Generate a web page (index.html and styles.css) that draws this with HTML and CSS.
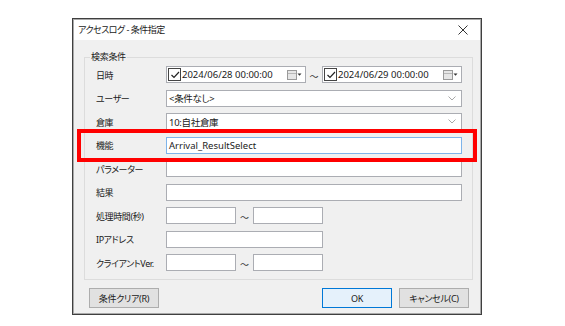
FILE: index.html
```html
<!DOCTYPE html>
<html lang="ja">
<head>
<meta charset="utf-8">
<link rel="stylesheet" href="styles.css">
</head>
<body>
<div class="dialog">
  <div class="titlebar">
    <span class="title">アクセスログ - 条件指定</span>
    <svg class="close" width="10" height="10" viewBox="0 0 10 10"><path d="M0.5 0.5 L9.5 9.5 M9.5 0.5 L0.5 9.5" stroke="#333" stroke-width="1" fill="none"/></svg>
  </div>
  <div class="content">
    <fieldset class="group">
      <legend>検索条件</legend>
      <div class="rows">
        <div class="label">日時</div>
        <div class="field pair">
          <div class="datebox">
            <span class="chk"><svg width="10" height="10" viewBox="0 0 10 10"><path d="M1.5 5 L4 7.5 L9 2" stroke="#222" stroke-width="1.2" fill="none"/></svg></span>
            <span class="dtext">2024/06/28 00:00:00</span>
            <span class="cal"><svg width="15" height="10" viewBox="0 0 15 10"><rect x="0.5" y="0.5" width="9" height="9" fill="#e6e6e6" stroke="#9a9a9a"/><path d="M1 3.5 H9" stroke="#b8b8b8"/><path d="M10.5 3.5 L14.5 3.5 L12.5 5.8 Z" fill="#333"/></svg></span>
          </div>
          <span class="tilde">～</span>
          <div class="datebox">
            <span class="chk"><svg width="10" height="10" viewBox="0 0 10 10"><path d="M1.5 5 L4 7.5 L9 2" stroke="#222" stroke-width="1.2" fill="none"/></svg></span>
            <span class="dtext">2024/06/29 00:00:00</span>
            <span class="cal"><svg width="15" height="10" viewBox="0 0 15 10"><rect x="0.5" y="0.5" width="9" height="9" fill="#e6e6e6" stroke="#9a9a9a"/><path d="M1 3.5 H9" stroke="#b8b8b8"/><path d="M10.5 3.5 L14.5 3.5 L12.5 5.8 Z" fill="#333"/></svg></span>
          </div>
        </div>

        <div class="label">ユーザー</div>
        <div class="field combo"><span class="jp">&lt;条件なし&gt;</span><svg width="8" height="5" viewBox="0 0 8 5"><path d="M0.5 0.5 L4 4 L7.5 0.5" stroke="#a8a8a8" fill="none"/></svg></div>

        <div class="label">倉庫</div>
        <div class="field combo"><span class="jp">10:自社倉庫</span><svg width="8" height="5" viewBox="0 0 8 5"><path d="M0.5 0.5 L4 4 L7.5 0.5" stroke="#a8a8a8" fill="none"/></svg></div>

        <div class="label">機能</div>
        <div class="field text focus">Arrival_ResultSelect</div>

        <div class="label">パラメーター</div>
        <div class="field text"></div>

        <div class="label">結果</div>
        <div class="field text"></div>

        <div class="label">処理時間(秒)</div>
        <div class="field pair">
          <div class="text short"></div>
          <span class="tilde wide">～</span>
          <div class="text short"></div>
        </div>

        <div class="label">IPアドレス</div>
        <div class="field"><div class="text mid"></div></div>

        <div class="label">クライアントVer.</div>
        <div class="field pair">
          <div class="text short"></div>
          <span class="tilde wide">～</span>
          <div class="text short"></div>
        </div>
      </div>
    </fieldset>
    <div class="buttons">
      <button class="btn">条件クリア(R)</button>
      <div class="spacer"></div>
      <button class="btn ok">OK</button>
      <button class="btn">キャンセル(C)</button>
    </div>
  </div>
  <div class="highlight"></div>
</div>
</body>
</html>
```
FILE: styles.css
```css
* { box-sizing: border-box; }
html, body { margin: 0; padding: 0; background: #fff; }
body {
  padding: 18px 0 0 72px;
  font-family: "Noto Sans", "Noto Sans CJK JP", sans-serif;
  font-size: 9.5px;
  color: #1a1a1a;
  font-feature-settings: "palt";
}
.dialog {
  position: relative;
  width: 410px;
  height: 297px;
  border: 1px solid #3f3f3f;
  box-shadow: inset 0 0 0 1px #a9a9a9;
  background: #f0f0f0;
  display: flex;
  flex-direction: column;
}
.titlebar {
  height: 20px;
  margin: 1px 1px 0 1px;
  background: #fff;
  display: flex;
  align-items: center;
  padding: 0 12px 0 4px;
}
.title {
  flex: 1;
  line-height: 20px;
  font-size: 9px;
  letter-spacing: -0.5px;
}
.close { display: block; }
.content {
  flex: 1;
  display: flex;
  flex-direction: column;
  padding: 0 0 0 11px;
}
.group {
  margin: 11px 0 0 0;
  width: 389px;
  height: 229px;
  border: 1px solid #dcdcdc;
  padding: 3px 10px 0 10px;
  min-width: 0;
}
.group legend {
  padding: 0 1px;
  margin-left: -5px;
  line-height: 12px;
  height: 12px;
  font-size: 9px;
  letter-spacing: -0.3px;
}
.rows {
  display: grid;
  grid-template-columns: 71px 296px;
  grid-auto-rows: 17px;
  row-gap: 6.5px;
}
.label {
  display: flex;
  align-items: center;
  line-height: 17px;
  white-space: nowrap;
  font-size: 9px;
  letter-spacing: -0.4px;
  padding: 1px 0 0 1px;
}
.jp { letter-spacing: -0.3px; }
.field { display: flex; align-items: center; height: 17px; }
.text, .combo, .datebox {
  background: #fff;
  border: 1px solid #abadb3;
  height: 17px;
}
.field.text { padding-left: 2px; }
.focus { border-color: #7eb4ea; }
.combo { justify-content: space-between; padding: 0 5px 0 2px; }
.combo svg { display: block; }
.pair { display: flex; align-items: center; }
.datebox {
  width: 140px;
  display: flex;
  align-items: center;
  padding: 0 3px 0 1px;
}
.chk {
  width: 13px;
  height: 13px;
  border: 1px solid #444;
  display: flex;
  align-items: center;
  justify-content: center;
  margin-right: 1px;
}
.chk svg { display: block; }
.dtext { flex: 1; white-space: nowrap; }
.cal svg { display: block; }
.tilde {
  width: 16px;
  text-align: center;
  font-size: 9px;
  padding-top: 4px;
  color: #333;
}
.tilde.wide { width: 17px; }
.short { width: 70px; }
.mid { width: 157px; }
.buttons {
  display: flex;
  margin-top: 8px;
  padding: 0 12px 0 5px;
  gap: 7px;
}
.spacer { flex: 1; }
.btn {
  width: 70px;
  height: 20px;
  font: inherit;
  font-size: 9px;
  letter-spacing: -0.3px;
  color: #1a1a1a;
  background: #e1e1e1;
  border: 1px solid #adadad;
  padding: 0;
}
.btn.ok {
  background: #e5f1fb;
  border-color: #0078d7;
}
.highlight {
  position: absolute;
  left: 4px;
  top: 110px;
  width: 400px;
  height: 33px;
  border: 4px solid #ff0000;
}
```
